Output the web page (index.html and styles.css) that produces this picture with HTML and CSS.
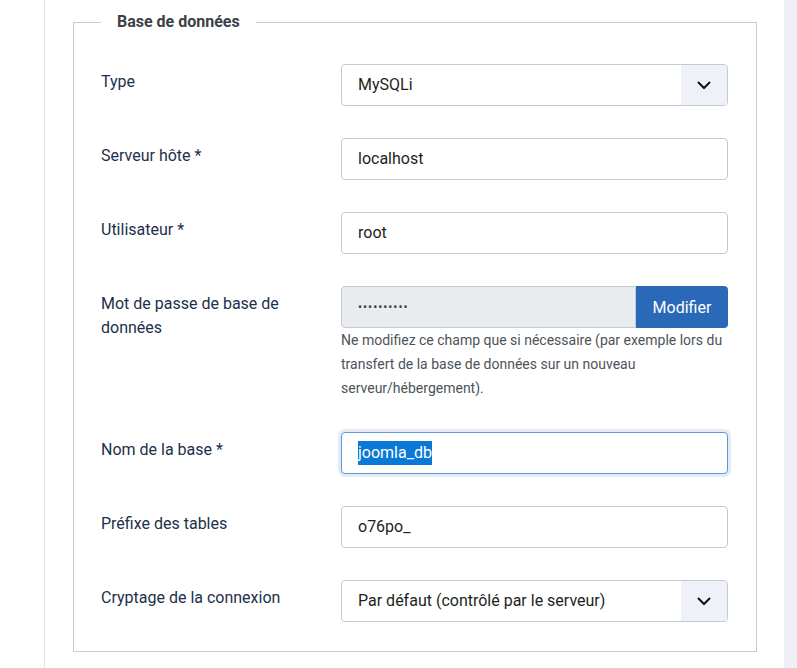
FILE: index.html
```html
<!DOCTYPE html>
<html lang="fr">
<head>
<meta charset="utf-8">
<title>Base de données</title>
<link rel="stylesheet" href="styles.css">
</head>
<body>
<div class="page">
  <div class="gutter"></div>
  <main class="main">
    <fieldset class="box">
      <legend class="legend">Base de données</legend>

      <div class="row">
        <div class="label">Type</div>
        <div class="control">
          <div class="field select">
            <span class="value">MySQLi</span>
            <span class="caret"><svg width="16" height="10" viewBox="0 0 16 10"><path d="M2 2 L8 8 L14 2" fill="none" stroke="#111" stroke-width="2"/></svg></span>
          </div>
        </div>
      </div>

      <div class="row">
        <div class="label">Serveur hôte *</div>
        <div class="control"><div class="field"><span class="value">localhost</span></div></div>
      </div>

      <div class="row">
        <div class="label">Utilisateur *</div>
        <div class="control"><div class="field"><span class="value">root</span></div></div>
      </div>

      <div class="row">
        <div class="label">Mot de passe de base de données</div>
        <div class="control">
          <div class="group">
            <div class="field disabled"><span class="dots">••••••••••</span></div>
            <button class="btn" type="button">Modifier</button>
          </div>
          <div class="help">Ne modifiez ce champ que si nécessaire (par exemple lors du transfert de la base de données sur un nouveau serveur/hébergement).</div>
        </div>
      </div>

      <div class="row">
        <div class="label">Nom de la base *</div>
        <div class="control"><div class="field focus"><span class="value sel">joomla_db</span></div></div>
      </div>

      <div class="row">
        <div class="label">Préfixe des tables</div>
        <div class="control"><div class="field"><span class="value">o76po_</span></div></div>
      </div>

      <div class="row">
        <div class="label">Cryptage de la connexion</div>
        <div class="control">
          <div class="field select">
            <span class="value">Par défaut (contrôlé par le serveur)</span>
            <span class="caret"><svg width="16" height="10" viewBox="0 0 16 10"><path d="M2 2 L8 8 L14 2" fill="none" stroke="#111" stroke-width="2"/></svg></span>
          </div>
        </div>
      </div>
    </fieldset>
  </main>
  <div class="strip"></div>
</div>
</body>
</html>
```
FILE: styles.css
```css
* { box-sizing: border-box; }
html, body { margin: 0; padding: 0; background: #fff; }
body {
  font-family: Roboto, "Liberation Sans", sans-serif;
  font-size: 16px;
  line-height: 1.5;
  color: #22262a;
}
.page {
  display: flex;
  height: 668px;
  overflow: hidden;
}
.gutter { width: 44px; flex: none; }
.main {
  flex: 1;
  border-left: 1px solid #dfe3e8;
  padding: 10px 27px 0 28px;
}
.strip { width: 13px; flex: none; background: #eef0f5; }

.box {
  margin: 0;
  border: 1px solid #c5ccd5;
  padding: 6px 28px 29px 27px;
  min-width: 0;
}
.legend {
  font-weight: 700;
  font-size: 16px;
  line-height: 24px;
  color: #3d4147;
  padding: 0 16px;
}

.row {
  display: grid;
  grid-template-columns: 240px 1fr;
  margin-top: 32px;
}
.row:first-of-type { margin-top: 24px; }
.label {
  padding: 6px 20px 0 0;
  color: #21304a;
}
.control { min-width: 0; }

.field {
  display: flex;
  align-items: center;
  height: 42px;
  border: 1px solid #c3cad4;
  border-radius: 4px;
  padding: 0 16px;
  background: #fff;
  color: #1d1f22;
}
.select { padding-right: 0; }
.select .value { flex: 1; }
.caret {
  width: 46px;
  height: 40px;
  display: flex;
  align-items: center;
  justify-content: center;
  background: #eef2f8;
  border-radius: 0 3px 3px 0;
}
.caret svg { display: block; }

.group { display: flex; }
.group .field {
  flex: 1;
  border-radius: 4px 0 0 4px;
}
.disabled { background: #e9ecef; }
.dots {
  font-size: 12px;
  letter-spacing: 1px;
  color: #3a3d42;
}
.btn {
  width: 92px;
  height: 42px;
  border: 0;
  border-radius: 0 4px 4px 0;
  background: #2a69b8;
  color: #fff;
  font-family: inherit;
  font-size: 16px;
  padding: 0;
}
.help {
  margin-top: 0;
  font-size: 14px;
  line-height: 24px;
  color: #4d5359;
}

.focus {
  border-color: #5e98d9;
  box-shadow: 0 0 0 3px #e5ebf3;
}
.sel {
  background: #0a78d7;
  color: #fff;
}
```
